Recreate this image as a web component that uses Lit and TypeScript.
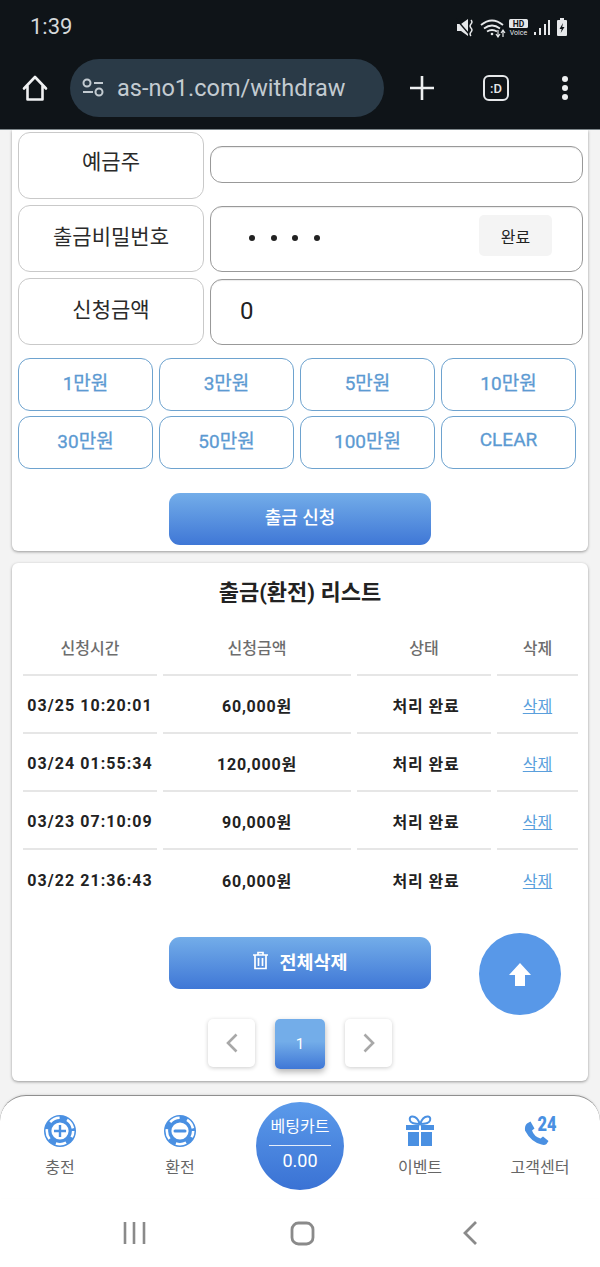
import { LitElement, html, css, svg } from "lit";
import { customElement } from "lit/decorators.js";

const rows = [
  ["03/25 10:20:01", "60,000원"],
  ["03/24 01:55:34", "120,000원"],
  ["03/23 07:10:09", "90,000원"],
  ["03/22 21:36:43", "60,000원"],
];
const amounts = ["1만원", "3만원", "5만원", "10만원", "30만원", "50만원", "100만원", "CLEAR"];

const chip = (inner: unknown) => html`<svg width="34" height="34" viewBox="0 0 34 34">
  <circle cx="17" cy="17" r="16" fill="#4a90e2"></circle>
  <circle cx="17" cy="17" r="13.2" fill="none" stroke="#fff" stroke-width="2.6" stroke-dasharray="10.5 7.8" stroke-dashoffset="4"></circle>
  <circle cx="17" cy="17" r="10.5" fill="#4a90e2"></circle>
  <circle cx="17" cy="17" r="8.6" fill="#fff"></circle>
  ${inner}
</svg>`;

@customElement("app-root")
export class AppRoot extends LitElement {
  static styles = css`
    :host { display: block; }
    * { box-sizing: border-box; }
    .app {
      width: 600px; height: 1267px; overflow: hidden; display: flex; flex-direction: column;
      background: #f3f3f3; font-family: Roboto, "Noto Sans CJK KR", sans-serif; color: #222;
    }
    .top { height: 130px; flex: none; background: #0f1418; border-bottom: 1px solid #7d868a; color: #d8dcdf; }
    .status { height: 59px; display: flex; align-items: center; padding: 0 29px 3px 30px; justify-content: space-between; }
    .time { font-size: 22px; color: #d5d8da; position: relative; top: -2px; }
    .sicons { display: block; }
    .addr { display: flex; align-items: center; height: 58px; padding-left: 21px; }
    .home { width: 28px; flex: none; display: block; }
    .pill {
      margin-left: 21px; width: 314px; height: 58px; border-radius: 29px; background: #2a3a47;
      display: flex; align-items: center; padding-left: 12px; gap: 13px; color: #c3cbd1; font-size: 23.5px;
    }
    .plus { margin-left: 25px; display: block; }
    .tab { margin-left: 48px; display: flex; width: 26px; height: 26px; border: 2.5px solid #e6e8ea; border-radius: 6px;
      align-items: center; justify-content: center; font-size: 13px; font-weight: 500; color: #e6e8ea; }
    .dots { margin-left: 52px; display: block; }

    main { flex: 1; min-height: 0; overflow: hidden; padding: 0 12px; }
    .card { background: #fff; box-shadow: 0 1px 3px rgba(0, 0, 0, 0.38); border-radius: 0 0 6px 6px; }
    .form { padding: 2px 6px 6px; height: 421px; margin-bottom: 12px; }
    .frow { display: grid; grid-template-columns: 186px 373px; column-gap: 6px; align-items: center; margin-bottom: 6px; }
    .lab {
      height: 67px; border: 1px solid #c9c9c9; border-radius: 12px; display: flex; justify-content: center;
      padding-top: 12px; font-size: 21px; color: #2a2a2a;
    }
    .lab.mid { padding-top: 14px; }
    .inp { border: 1px solid #999; border-radius: 12px; box-shadow: inset 0 1px 1px rgba(0,0,0,.08); }
    .inp.thin { height: 37px; margin-top: -2px; }
    .inp.tall { height: 66px; display: flex; align-items: center; justify-content: space-between; padding: 0 30px 2px 29px; font-size: 24px; color: #222; }
    .dotsp { display: flex; gap: 15.5px; padding-left: 9px; }
    .dotsp i { width: 6px; height: 6px; background: #222; border-radius: 50%; }
    .done { width: 73px; height: 41px; background: #f4f4f4; border-radius: 5px; display: flex; align-items: center; justify-content: center; font-size: 16px; color: #222; margin: -4px 0 0 0; }
    .amts { display: grid; grid-template-columns: repeat(4, 135px); gap: 5px 6px; margin-top: 13px; }
    .amt { height: 53px; border: 1px solid #6ea3cf; border-radius: 12px; display: flex; justify-content: center; align-items: center; padding-bottom: 6px; color: #5c9ad2; font-size: 19px; font-weight: 400; -webkit-text-stroke: 0.3px #5c9ad2; }
    .cta {
      display: flex; align-items: center; justify-content: center; gap: 10px; width: 262px; height: 52px; margin: 0 auto; border-radius: 11px;
      background: linear-gradient(#73ade9, #3f77d6); color: #fff; font-size: 18px; font-weight: 500;
    }
    .form .cta { margin-top: 24px; padding-bottom: 6px; }
    .list { position: relative; height: 518px; padding-top: 12px; border-radius: 6px; }
    h2 { margin: 0; font-size: 22px; font-weight: 700; text-align: center; color: #222; line-height: 36px; }
    .tr { display: grid; grid-template-columns: 134px 188px 134px 81px; column-gap: 6px; margin: 0 0 0 11px; }
    .tr > div { height: 58px; padding-top: 2px; display: flex; align-items: center; justify-content: center; border-bottom: 2px solid #e6e6e6; font-size: 16px; font-weight: 700; letter-spacing: 0.8px; color: #222; white-space: nowrap; }
    .tr .stamp { letter-spacing: 1.05px; }
    .tr .state { padding-left: 4px; }
    .tr.head { margin-top: 10px; }
    .tr.head > div { height: 55px; padding: 0 0 2px; color: #6d6d6d; font-weight: 500; letter-spacing: 0; }
    .tr > div.last { border-bottom: none; }
    .tr a { color: #5a9fdc; text-decoration: underline; font-weight: 400; letter-spacing: 0; }
    .list .cta { margin-top: 29px; font-weight: 700; font-size: 18.5px; padding-bottom: 5px; gap: 10px; }
    .up { position: absolute; left: 467px; top: 370px; width: 82px; height: 82px; border-radius: 50%; background: #5898e8; display: flex; align-items: center; justify-content: center; }
    .pager { display: flex; justify-content: center; margin-top: 30px; gap: 20px; align-items: flex-start; }
    .pg { width: 47px; height: 48px; border-radius: 5px; background: #fff; box-shadow: 0 1px 4px rgba(0,0,0,.2); display: flex; align-items: center; justify-content: center; }
    .pg.on { width: 50px; height: 50px; background: linear-gradient(#73ade9 45%, #3f77d6); color: #fff; font-size: 15px; box-shadow: 0 3px 6px rgba(0,0,0,.3); }

    .tabs {
      flex: none; height: 103px; background: #fff; border-radius: 26px 26px 0 0; border-top: 1px solid #8f8f8f;
      box-shadow: 0 -1px 2px rgba(0,0,0,.08);
      display: grid; grid-template-columns: repeat(5, 120px); padding-top: 18px; position: relative;
    }
    .ti { display: flex; flex-direction: column; align-items: center; gap: 9px; color: #666; font-size: 16px; line-height: 22px; white-space: nowrap; }
    .ti svg { display: block; overflow: visible; }
    .ti svg.tall { margin-top: -6px; }
    .cart {
      width: 88px; height: 88px; border-radius: 50%; margin: -12px auto 0; background: linear-gradient(#5b9aea, #3a72d4);
      color: #fff; display: flex; flex-direction: column; align-items: center; padding-top: 13px; font-size: 16px;
    }
    .cart span { line-height: 24px; }
    .cart hr { width: 62px; margin: 0; border: 0; border-top: 1px solid #e4edfa; margin-top: 6px; }
    .cart b { font-weight: 400; font-size: 18px; line-height: 28px; margin-top: 1px; }
    .sys { flex: none; height: 69px; background: #fff; display: flex; align-items: flex-start; justify-content: center; padding-top: 23px; }
    .sys svg { display: block; }
  `;

  render() {
    return html`<div class="app">
      <div class="top">
        <div class="status">
          <span class="time">1:39</span>
          <svg class="sicons" width="115" height="20" viewBox="0 0 115 20">
            <path d="M1 6h4l7-5v17l-7-5H1z" fill="#e6e8ea"></path>
            <path d="M0 1l13 15" stroke="#0f1418" stroke-width="1.4"></path>
            <path d="M15 2q2 2 0 4t0 4 0 4 0 4" stroke="#e6e8ea" stroke-width="1.4" fill="none"></path>
            <path d="M25 7q11-9 22 0M28 10.500q8-6 16 0M31 13.500q5-3 10 0" stroke="#e6e8ea" stroke-width="1.8" fill="none"></path>
            <circle cx="36" cy="16" r="1.300" fill="#e6e8ea"></circle>
            <path d="M42 12v6M40 16l2 3 2-3M47 19v-6M45 15l2-3 2 3" stroke="#e6e8ea" stroke-width="1.2" fill="none"></path>
            <rect x="53" y="1" width="19" height="9" rx="1.500" fill="#e6e8ea"></rect>
            <text x="62.500" y="8.500" text-anchor="middle" font-size="8.500" font-weight="700" fill="#0f1418" font-family="Roboto">HD</text>
            <text x="62.500" y="17" text-anchor="middle" font-size="7" fill="#e6e8ea" font-family="Roboto">Voice</text>
            <path d="M78 14h2v3h-2zM83 10h2v7h-2zM88 6h2v11h-2zM92 2h2v15h-2z" fill="#e6e8ea"></path>
            <path d="M104 0h4v2h2q1 0 1 1v14q0 1-1 1h-8q-1 0-1-1V3q0-1 1-1h2z" fill="#e6e8ea"></path>
            <path d="M107 5l-3.500 6h2.200l-1 4 3.800-6h-2.300z" fill="#0f1418"></path>
          </svg>
        </div>
        <div class="addr">
          <svg class="home" height="28" viewBox="0 0 28 28"><path d="M3 14.500L14 3l11 11.500M6.500 12v13.500h15V12" fill="none" stroke="#f0f1f2" stroke-width="2.600" stroke-linejoin="round" stroke-linecap="round"></path></svg>
          <div class="pill">
            <svg width="22" height="20" viewBox="0 0 22 20" fill="none" stroke="#c3cbd1" stroke-width="2"><circle cx="5" cy="5" r="3.500"></circle><path d="M12 5h9M1 14h10"></path><circle cx="17" cy="14" r="3.500"></circle></svg>
            <span>as-no1.com/withdraw</span>
          </div>
          <svg class="plus" width="26" height="26" viewBox="0 0 26 26"><path d="M13 1v24M1 13h24" stroke="#eef0f1" stroke-width="2.600"></path></svg>
          <div class="tab">:D</div>
          <svg class="dots" width="8" height="26" viewBox="0 0 8 26"><circle cx="4" cy="4" r="3" fill="#eef0f1"></circle><circle cx="4" cy="13" r="3" fill="#eef0f1"></circle><circle cx="4" cy="22" r="3" fill="#eef0f1"></circle></svg>
        </div>
      </div>

      <main>
        <section class="card form">
          <div class="frow"><div class="lab">예금주</div><div class="inp thin"></div></div>
          <div class="frow"><div class="lab mid">출금비밀번호</div><div class="inp tall"><span class="dotsp"><i></i><i></i><i></i><i></i></span><span class="done">완료</span></div></div>
          <div class="frow"><div class="lab mid">신청금액</div><div class="inp tall"><span>0</span></div></div>
          <div class="amts">${amounts.map((a) => html`<div class="amt">${a}</div>`)}</div>
          <div class="cta">출금 신청</div>
        </section>

        <section class="card list">
          <h2>출금(환전) 리스트</h2>
          <div class="tr head"><div>신청시간</div><div>신청금액</div><div>상태</div><div>삭제</div></div>
          ${rows.map((r, i) => html`<div class="tr">
            <div class="stamp ${i === 3 ? "last" : ""}">${r[0]}</div>
            <div class=${i === 3 ? "last" : ""}>${r[1]}</div>
            <div class="state ${i === 3 ? "last" : ""}">처리 완료</div>
            <div class=${i === 3 ? "last" : ""}><a>삭제</a></div>
          </div>`)}
          <div class="cta">
            <svg width="17" height="19" viewBox="0 0 17 19" fill="none" stroke="#fff" stroke-width="1.700"><path d="M1 4h15M6 4V1.500h5V4M3 4v13.500h11V4M6.500 7v8M10.500 7v8"></path></svg>
            <span>전체삭제</span>
          </div>
          <div class="up"><svg width="22" height="23" viewBox="0 0 22 23"><path d="M11 0l11 12h-6v11H6V12H0z" fill="#fff"></path></svg></div>
          <div class="pager">
            <div class="pg"><svg width="12" height="20" viewBox="0 0 12 20"><path d="M10.500 1.500L2 10l8.500 8.500" fill="none" stroke="#a8a8a8" stroke-width="2.600"></path></svg></div>
            <div class="pg on">1</div>
            <div class="pg"><svg width="12" height="20" viewBox="0 0 12 20"><path d="M1.500 1.500L10 10l-8.500 8.500" fill="none" stroke="#a8a8a8" stroke-width="2.600"></path></svg></div>
          </div>
        </section>
      </main>

      <div class="tabs">
        <div class="ti">${chip(svg`<path d="M17 11v12M11 17h12" stroke="#4a90e2" stroke-width="2.400"></path>`)}<span>충전</span></div>
        <div class="ti">${chip(svg`<path d="M12 17h10" stroke="#4a90e2" stroke-width="3" stroke-linecap="round"></path>`)}<span>환전</span></div>
        <div class="cart"><span>베팅카트</span><hr /><b>0.00</b></div>
        <div class="ti">
          <svg width="34" height="34" viewBox="0 0 34 34"><path d="M17 10q-3-8-8-7.500-3 .5-2 4 1 3.500 10 3.500 9 0 10-3.500 1-3.500-2-4-5-.5-8 7.500z" fill="none" stroke="#4a90e2" stroke-width="2"></path><path d="M3 11h13v5H3zM18 11h13v5H18zM5 18h11v14H5zM18 18h11v14H18z" fill="#4a90e2"></path></svg>
          <span>이벤트</span>
        </div>
        <div class="ti">
          <svg class="tall" width="34" height="40" viewBox="0 -6 34 40"><path d="M4 9.500l3.500-2 4 7-2.500 2q2 6 8.500 8l2.500-2 5.500 4.500-2 3q-2 1.500-5 .5Q8 28 2 16.500q-.5-5 2-7z" fill="#4a90e2"></path><text x="24" y="17" text-anchor="middle" font-family="Roboto" font-weight="900" font-size="21" fill="#4a90e2" textLength="19" lengthAdjust="spacingAndGlyphs">24</text></svg>
          <span>고객센터</span>
        </div>
      </div>
      <div class="sys">
        <svg width="360" height="26" viewBox="0 0 360 26">
          <path d="M5 1v22M14 1v22M24 1v22" stroke="#8a8a8a" stroke-width="2.600"></path>
          <rect x="172" y="2" width="21" height="21" rx="6.500" fill="none" stroke="#8a8a8a" stroke-width="2.800"></rect>
          <path d="M356 1L345 12l11 11" fill="none" stroke="#8a8a8a" stroke-width="2.800"></path>
        </svg>
      </div>
    </div>`;
  }
}
